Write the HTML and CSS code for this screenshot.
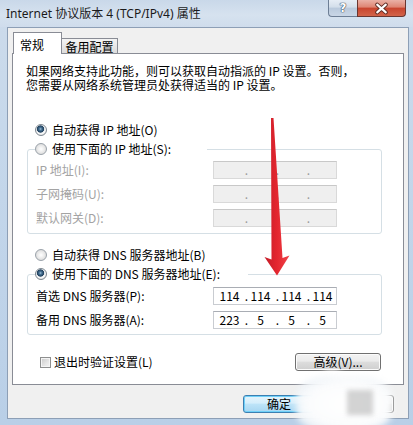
FILE: index.html
```html
<!DOCTYPE html>
<html lang="zh-CN">
<head>
<meta charset="utf-8">
<title>Internet 协议版本 4 (TCP/IPv4) 属性</title>
<link rel="stylesheet" href="styles.css">
</head>
<body>
<div class="window">
  <div class="titlebar">
    <span class="title">Internet 协议版本 4 (TCP/IPv4) 属性</span>
    <div class="caption-btns">
      <span class="cbtn help">?</span>
      <span class="cbtn close">
        <svg width="49" height="17" viewBox="0 0 49 17">
          <path d="M20 4.5 L29 12.5 M29 4.5 L20 12.5" stroke="#5a2a22" stroke-width="4.2" stroke-linecap="round"/>
          <path d="M20 4.5 L29 12.5 M29 4.5 L20 12.5" stroke="#ffffff" stroke-width="2.2" stroke-linecap="round"/>
        </svg>
      </span>
    </div>
  </div>
  <div class="client">
    <div class="tabs">
      <div class="tab active">常规</div>
      <div class="tab">备用配置</div>
    </div>
    <div class="panel">
      <p class="intro"><span class="intro-line">如果网络支持此功能，则可以获取自动指派的 IP 设置。否则，</span><span class="intro-line">您需要从网络系统管理员处获得适当的 IP 设置。</span></p>

      <div class="opt first"><span class="radio on"></span>自动获得 IP 地址(O)</div>
      <fieldset class="group">
        <legend class="legend legend-ip"><span class="opt in-legend"><span class="radio"></span>使用下面的 IP 地址(S):</span></legend>
        <div class="rows">
          <span class="lbl off">IP 地址(I):</span>
          <div class="ipbox off"><span class="f"></span><span class="d">.</span><span class="f"></span><span class="d">.</span><span class="f"></span><span class="d">.</span><span class="f"></span></div>
          <span class="lbl off">子网掩码(U):</span>
          <div class="ipbox off"><span class="f"></span><span class="d">.</span><span class="f"></span><span class="d">.</span><span class="f"></span><span class="d">.</span><span class="f"></span></div>
          <span class="lbl off">默认网关(D):</span>
          <div class="ipbox off"><span class="f"></span><span class="d">.</span><span class="f"></span><span class="d">.</span><span class="f"></span><span class="d">.</span><span class="f"></span></div>
        </div>
      </fieldset>

      <div class="opt second"><span class="radio"></span>自动获得 DNS 服务器地址(B)</div>
      <fieldset class="group dns">
        <legend class="legend legend-dns"><span class="opt in-legend"><span class="radio on"></span>使用下面的 DNS 服务器地址(E):</span></legend>
        <div class="rows">
          <span class="lbl">首选 DNS 服务器(P):</span>
          <div class="ipbox"><span class="f">114</span><span class="d">.</span><span class="f">114</span><span class="d">.</span><span class="f">114</span><span class="d">.</span><span class="f">114</span></div>
          <span class="lbl">备用 DNS 服务器(A):</span>
          <div class="ipbox"><span class="f">223</span><span class="d">.</span><span class="f">5</span><span class="d">.</span><span class="f">5</span><span class="d">.</span><span class="f">5</span></div>
        </div>
      </fieldset>

      <div class="check-row">
        <div class="check"><span class="checkbox"></span>退出时验证设置(L)</div>
        <button class="btn adv">高级(V)...</button>
      </div>
    </div>
    <div class="footer">
      <button class="btn default">确定</button>
      <button class="btn">取消</button>
    </div>
  </div>

  <svg class="arrow" width="413" height="425" viewBox="0 0 413 425">
    <defs>
      <linearGradient id="ar" x1="0" y1="0" x2="1" y2="0">
        <stop offset="0" stop-color="#c41c28"/>
        <stop offset="0.5" stop-color="#e4262f"/>
        <stop offset="1" stop-color="#f0444a"/>
      </linearGradient>
    </defs>
    <polygon points="271,118 273.5,118 282.5,258 289.5,255.5 277,275.5 264.5,257 271.5,259.5" fill="url(#ar)"/>
  </svg>

  <div class="watermark"><span class="wm-neck"></span><span class="wm-blob"></span><span class="wm-gray"></span></div>
</div>
</body>
</html>
```

FILE: styles.css
```css
* { box-sizing: border-box; }

html, body {
  margin: 0;
  padding: 0;
}

body {
  width: 413px;
  height: 425px;
  overflow: hidden;
  font-family: "Noto Sans CJK SC", "Noto Sans", sans-serif;
  font-size: 12px;
  color: #000;
  background: #c4d6ea;
}

.window {
  position: relative;
  width: 413px;
  height: 425px;
  display: flex;
  flex-direction: column;
  padding: 0 4px 6px 7px;
  background: linear-gradient(180deg, #cddbeb 0, #c6d8eb 30%, #b9cfe7 100%);
}

/* title bar */
.titlebar {
  height: 27px;
  display: flex;
  align-items: flex-start;
  margin: 0 -4px 0 -7px;
  background: linear-gradient(180deg, #c9d8e9 0, #d6e2ef 55%, #cfdcec 100%);
}

.title {
  font-family: "Noto Sans", "Noto Sans CJK SC", sans-serif;
  font-size: 12px;
  line-height: 16px;
  padding: 6px 0 0 6px;
  color: #1b1b1b;
  white-space: nowrap;
}

.caption-btns {
  margin-left: auto;
  display: flex;
  padding-right: 7px;
}

.cbtn {
  height: 17px;
  display: flex;
  align-items: center;
  justify-content: center;
  border: 1px solid #6d7e95;
  border-top: none;
}

.help {
  width: 29px;
  border-radius: 0 0 0 4px;
  border-right: none;
  background: linear-gradient(180deg, #e6edf5 0, #d3deea 45%, #b9c9dc 50%, #c9d6e6 100%);
  color: #fff;
  font-family: "DejaVu Sans", sans-serif;
  font-weight: bold;
  font-size: 12px;
  line-height: 15px;
  text-shadow: 0 0 1px #34445a, 0 0 1px #34445a, 0 0 1px #34445a;
}

.close {
  width: 49px;
  border-color: #6a3630;
  border-radius: 0 0 4px 0;
  background: linear-gradient(180deg, #eab1a6 0, #de8472 45%, #c8442e 50%, #d2644a 100%);
}

/* client area */
.client {
  flex: 1;
  background: #f0f0f0;
  border: 1px solid #8d9fb6;
  padding: 4px 4px 0 4px;
  display: flex;
  flex-direction: column;
}

.tabs {
  display: flex;
  align-items: flex-end;
  height: 22px;
  padding-left: 1px;
  margin-bottom: -1px;
  position: relative;
  z-index: 1;
}

.tab {
  height: 16px;
  width: 57px;
  margin-left: -1px;
  border: 1px solid #898c95;
  background: linear-gradient(180deg, #f4f4f4 0, #e8e8e8 50%, #dcdcdc 100%);
  padding-top: 1px;
  line-height: 13px;
  text-align: center;
  white-space: nowrap;
}

.tab.active {
  position: relative;
  z-index: 2;
  height: 22px;
  width: 49px;
  margin-left: 0;
  border-bottom: none;
  background: #fff;
  text-align: left;
  padding: 5px 0 0 6px;
  line-height: 14px;
}

.panel {
  height: 332px;
  flex: none;
  background: #fff;
  border: 1px solid #898c95;
  padding: 10px 21px 0 14px;
}

.intro {
  margin: 0 0 0 -1px;
  display: flex;
  flex-direction: column;
  white-space: nowrap;
}

.intro-line {
  display: block;
  height: 14px;
  line-height: 14px;
}

.opt {
  display: flex;
  align-items: center;
  gap: 5px;
  height: 14px;
  line-height: 14px;
  white-space: nowrap;
}

.opt.first {
  margin: 31px 0 0 8px;
}

.opt.second {
  margin: 14px 0 0 8px;
}

.radio {
  flex: none;
  width: 12px;
  height: 12px;
  border-radius: 50%;
  border: 1px solid #9aa2aa;
  background: radial-gradient(circle at 50% 50%, #ffffff 0, #f0f0f0 35%, #d0d0d0 100%);
}

.radio.on {
  border-color: #7d8790;
  background: radial-gradient(circle at 45% 40%, #a9c6dc 0, #4a7597 1.3px, #1f3f5c 3.3px, #dfe4e8 3.9px, #fbfbfb 4.8px, #e2e2e2 6px);
}

.group {
  margin: 5px 0 0 0;
  padding: 5px 8px 6px 8px;
  border: 1px solid #d5dfe5;
  border-radius: 3px;
  min-width: 0;
}

.group.dns {
  padding-top: 6px;
  padding-bottom: 5px;
}

.legend {
  padding: 0;
  margin-left: -1px;
  background: #fff;
}

.legend-ip { width: 172px; }
.legend-dns { width: 213px; }

.rows {
  display: grid;
  grid-template-columns: 177px 124px;
  grid-auto-rows: 18px;
  row-gap: 6px;
  align-items: center;
}

.lbl {
  white-space: nowrap;
  line-height: 14px;
}

.lbl.off { color: #a3a3a3; }

.ipbox {
  display: flex;
  height: 18px;
  padding-left: 3px;
  border: 1px solid #c9ccd1;
  border-top-color: #a9adb4;
  background: #fff;
  line-height: 16px;
}

.ipbox.off {
  background: #efefef;
  border-color: #d9d9d9;
  border-top-color: #c8c8c8;
  color: #9a9a9a;
}

.ipbox .f {
  width: 25px;
  text-align: center;
}

.ipbox .d {
  width: 6px;
  text-align: right;
}

.check-row {
  display: flex;
  align-items: center;
  justify-content: space-between;
  height: 18px;
  margin-top: 18px;
}

.check {
  display: flex;
  align-items: center;
  gap: 3px;
  margin-left: 13px;
  line-height: 14px;
  white-space: nowrap;
}

.checkbox {
  flex: none;
  width: 11px;
  height: 11px;
  border: 1px solid #8e8f8f;
  box-shadow: inset 0 0 0 1px #f4f4f4;
  background: linear-gradient(135deg, #c9c9c9 0, #e6e6e6 60%, #f4f4f4 100%);
}

.btn {
  font-family: "Noto Sans CJK SC", "Noto Sans", sans-serif;
  font-size: 12px;
  height: 18px;
  width: 72px;
  padding: 0;
  line-height: 16px;
  color: #000;
  border: 1px solid #707070;
  border-radius: 3px;
  background: linear-gradient(180deg, #f3f3f3 0, #ebebeb 45%, #dddddd 50%, #cfcfcf 100%);
  box-shadow: inset 0 0 0 1px #fbfbfb;
}

.btn.adv {
  width: 86px;
  margin-right: 1px;
}

.btn.default {
  border-color: #3c7fb1;
  background: linear-gradient(180deg, #e5f4fc 0, #d4eefb 45%, #bde4f8 50%, #a7d6f1 100%);
  box-shadow: inset 0 0 0 1px #6fd0f8;
}

.footer {
  display: flex;
  justify-content: flex-end;
  gap: 7px;
  padding: 10px 10px 0 0;
}

/* overlays */
.arrow {
  position: absolute;
  left: 0;
  top: 0;
  pointer-events: none;
}

.watermark {
  position: absolute;
  left: 290px;
  top: 368px;
  width: 108px;
  height: 62px;
  pointer-events: none;
}

.wm-neck {
  position: absolute;
  left: 32px;
  top: 2px;
  width: 20px;
  height: 16px;
  border-radius: 40%;
  background: rgba(255, 255, 255, 0.85);
  filter: blur(3px);
}

.wm-blob {
  position: absolute;
  left: 6px;
  top: 8px;
  width: 96px;
  height: 56px;
  border-radius: 35%;
  background: radial-gradient(ellipse at 55% 50%, #ffffff 0, #fbfcfd 55%, rgba(236, 242, 247, 0.9) 80%, rgba(236, 242, 247, 0) 100%);
  filter: blur(3px);
}

.wm-gray {
  position: absolute;
  left: 57px;
  top: 22px;
  width: 26px;
  height: 25px;
  background: rgba(175, 175, 175, 0.55);
  filter: blur(2.5px);
}
```
